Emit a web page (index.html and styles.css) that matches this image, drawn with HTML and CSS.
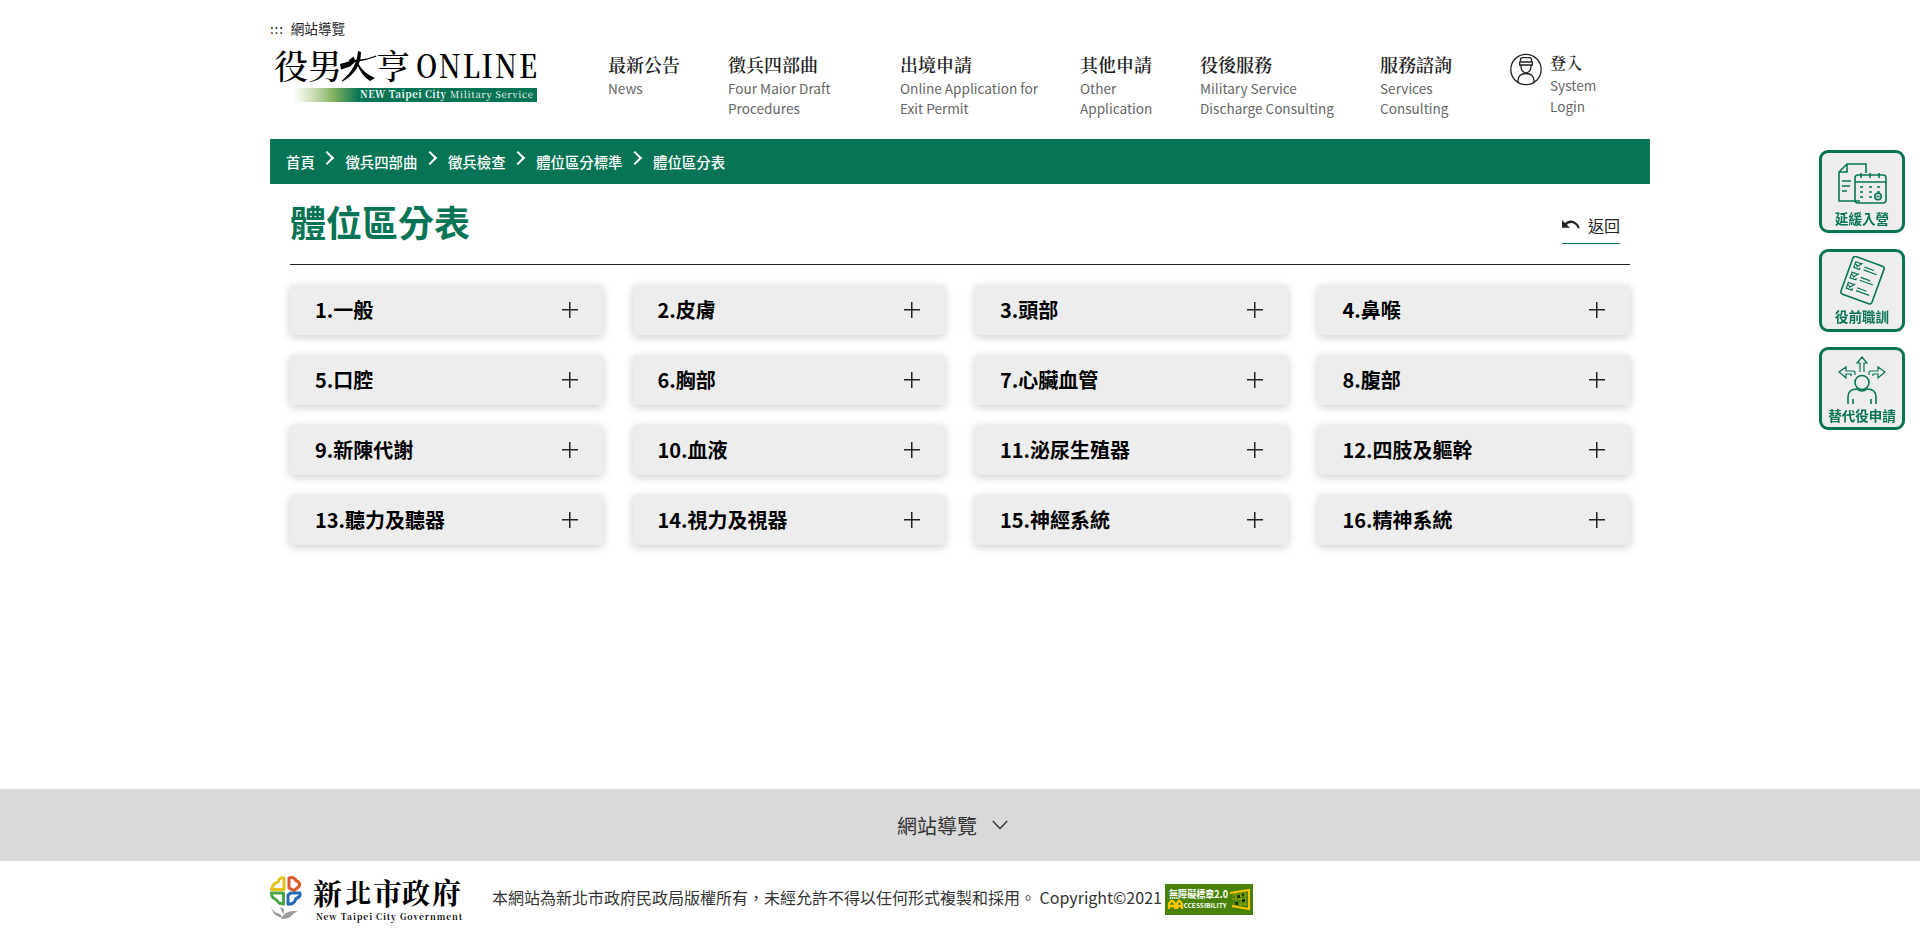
FILE: index.html
```html
<!DOCTYPE html>
<html lang="zh-Hant">
<head>
<meta charset="utf-8">
<title>體位區分表</title>
<link rel="stylesheet" href="styles.css">
</head>
<body>
<div class="page">
  <header class="header">
    <div class="brand">
      <div class="sitemap-link"><a class="dots">:::</a><a>網站導覽</a></div>
      <svg class="logo" width="270" height="60" viewBox="0 0 270 60">
        <defs>
          <linearGradient id="bar"><stop offset="0" stop-color="#fff"/><stop offset=".08" stop-color="#cfdfb8"/><stop offset=".17" stop-color="#7fae5e"/><stop offset=".27" stop-color="#077555"/></linearGradient>
        </defs>
        <g class="logo-zh">
          <text x="4" y="32" font-size="34">役</text>
          <text x="38" y="32" font-size="34">男</text>
          <text x="106" y="32" font-size="34">亨</text>
        </g>
        <g class="brush">
          <path d="M70 17 L82 13.500 L97 11.500 L106 8.500 L106.500 9.500 L96 13 L85 15 L80 19.500 L71 22.500Z"/>
          <path d="M88 4 L91 5 Q91 24 72.500 34.500 L71.500 34 Q87 21 88 4Z"/>
          <path d="M88 16 Q93 26 105 31 L100 34 Q91 28 87 17Z"/>
          <path d="M79 13 L83.500 9.500 L85 13 L80 18Z"/>
        </g>
        <text class="logo-en" transform="translate(146 31) scale(.84 1)" font-size="32.500" textLength="144">ONLINE</text>
        <rect x="23" y="41" width="244" height="14" fill="url(#bar)"/>
        <text class="logo-sub" x="90" y="51" textLength="86" font-weight="700">NEW Taipei City</text>
        <text class="logo-sub" x="180" y="51" textLength="83">Military Service</text>
      </svg>
    </div>
    <nav class="nav">
      <a class="nav-item"><b>最新公告</b><span>News</span></a>
      <a class="nav-item"><b>徵兵四部曲</b><span>Four Maior Draft<br>Procedures</span></a>
      <a class="nav-item"><b>出境申請</b><span>Online Application for<br>Exit Permit</span></a>
      <a class="nav-item"><b>其他申請</b><span>Other<br>Application</span></a>
      <a class="nav-item"><b>役後服務</b><span>Military Service<br>Discharge Consulting</span></a>
      <a class="nav-item"><b>服務諮詢</b><span>Services<br>Consulting</span></a>
    </nav>
    <a class="login">
      <svg width="32" height="33" viewBox="0 0 32 33" fill="none" stroke="#222" stroke-width="1.300">
        <circle cx="16" cy="16.500" r="15.200"/>
        <path d="M10.500 8V7Q10.500 4.700 12.500 4.700H19.500Q21.500 4.700 21.500 7V8L22.300 9V12H9.700V9L10.500 8M10.500 9H21.500M11 12V14Q11.500 19.500 16 19.800Q20.500 19.500 21 14V12M8 29V27.500Q8.500 20.500 16 20.500Q23.500 20.500 24 27.500V29"/>
      </svg>
      <span class="login-text"><b>登入</b><span>System<br>Login</span></span>
    </a>
  </header>

  <div class="crumbs">
    <a>首頁</a><i></i><a>徵兵四部曲</a><i></i><a>徵兵檢查</a><i></i><a>體位區分標準</a><i></i><a>體位區分表</a>
  </div>

  <main class="content">
    <div class="title-row">
      <h1>體位區分表</h1>
      <a class="back">
        <svg width="18" height="10" viewBox="0 0 18 10"><path d="M0 0L3 3Q9-1.500 14 2.500Q17 4.500 17.700 8L16 8.500Q14.500 4.500 11 3.200Q7.500 2.200 4.800 4.700L8 7.800H0Z" fill="#222"/></svg>
        <span>返回</span>
      </a>
    </div>
    <div class="cards">
      <div class="card"><span>1.一般</span><i></i></div>
      <div class="card"><span>2.皮膚</span><i></i></div>
      <div class="card"><span>3.頭部</span><i></i></div>
      <div class="card"><span>4.鼻喉</span><i></i></div>
      <div class="card"><span>5.口腔</span><i></i></div>
      <div class="card"><span>6.胸部</span><i></i></div>
      <div class="card"><span>7.心臟血管</span><i></i></div>
      <div class="card"><span>8.腹部</span><i></i></div>
      <div class="card"><span>9.新陳代謝</span><i></i></div>
      <div class="card"><span>10.血液</span><i></i></div>
      <div class="card"><span>11.泌尿生殖器</span><i></i></div>
      <div class="card"><span>12.四肢及軀幹</span><i></i></div>
      <div class="card"><span>13.聽力及聽器</span><i></i></div>
      <div class="card"><span>14.視力及視器</span><i></i></div>
      <div class="card"><span>15.神經系統</span><i></i></div>
      <div class="card"><span>16.精神系統</span><i></i></div>
    </div>
  </main>
</div>

<div class="sitemap-bar"><span>網站導覽</span><svg width="16" height="10" viewBox="0 0 16 10"><path d="M.7 1L8 8.500L15.300 1" fill="none" stroke="#333" stroke-width="1.400"/></svg></div>

<footer class="footer">
  <svg class="gov" width="196" height="50" viewBox="0 0 196 50">
    <g fill="none" stroke-width="3" stroke-linejoin="round">
      <path stroke="#e8c21c" d="M14 14.500V3Q10 1.500 8 7Q3 8 1.500 14.500Z"/>
      <path stroke="#e0592a" d="M19 13V3Q24 1.500 26 5.500Q31 7.500 29 11.500L24 15.500Z"/>
      <path stroke="#4ea345" d="M13.500 18V29L9 28Q7 25 5 24Q1 22 1.500 18Z"/>
      <path stroke="#2869b2" d="M18 29V20L21 18H30Q31 22 26 23.500Q24 30 18 29Z"/>
    </g>
    <path fill="#999" d="M1 32Q4 38 8 38Q11 39 13 43Q9 42 7 41Q3 39 1 32ZM10 32L13.500 40L14 34ZM28 36.500Q16 34 11 44Q20 44 22 40Q24 37 28 36.500Z"/>
    <g class="gov-zh">
      <text x="43" y="30" font-size="29">新</text>
      <text x="75" y="28" font-size="26">北</text>
      <text x="103" y="30" font-size="29">市</text>
      <text x="132" y="29" font-size="28">政</text>
      <text x="162" y="29" font-size="29">府</text>
    </g>
    <text class="gov-en" x="46" y="45" textLength="146">New Taipei City Government</text>
  </svg>
  <p>本網站為新北市政府民政局版權所有，未經允許不得以任何形式複製和採用。 Copyright©2021</p>
  <svg class="a11y" width="88" height="31" viewBox="0 0 88 31">
    <rect width="88" height="31" fill="#488206"/>
    <text x="4" y="14" font-size="10" textLength="59" lengthAdjust="spacingAndGlyphs" fill="#fff">無障礙標章2.0</text>
    <path d="M4 25V20Q7 14 10 20V25M5 22H9M12 25V20Q14 14 17 20V25M13 22H16" fill="none" stroke="#fdc500" stroke-width="2.300"/>
    <text x="18.500" y="24" font-size="6.500" textLength="43" lengthAdjust="spacingAndGlyphs" fill="#fff">CCESSIBILITY</text>
    <path d="M65 9L84 6V25L67 22" fill="none" stroke="#fdc500" stroke-width="2"/>
    <path d="M68 11H82M67 15H82M68 20H82M71 9V22M76 8V22M80 8V23" stroke="#b8b000" stroke-width="1" stroke-dasharray="2 1"/>
    <path d="M72 11h3v3h-3zM77 15h3v3h-3zM70 18h3v3h-3zM77 10h2v2h-2z" fill="#153800"/>
  </svg>
</footer>

<aside class="quick">
  <a>
    <svg width="54" height="46" viewBox="0 0 54 46" class="line">
      <path d="M25 39H4V10L12 2H31V11M4 10H12V2M7 19H16M7 24H15M7 29H12"/>
      <rect x="20" y="13" width="31" height="28" rx="3"/>
      <path d="M20 20H51M26 11v5M35 11v5M44 11v5"/>
      <path d="M25 25h3M34 25h3M42 25h3M25 30h3M34 30h3M42 30h3M25 35h3M34 35h3" stroke-width="1.500"/>
      <circle cx="43" cy="34.500" r="3.200"/><path d="M41.500 34.500h3"/>
    </svg>
    <span>延緩入營</span>
  </a>
  <a>
    <svg width="54" height="50" viewBox="0 0 54 50" class="line">
      <g transform="translate(27 24) rotate(20)">
        <rect x="-16" y="-20" width="33" height="40" rx="2.500"/>
        <path d="M-6-15H-12V-9H-6V-11M-11-13L-9-11L-5-16M-2-13H8M-2-10H12M-6-4H-12V2H-6V0M-11-2L-9 0L-5-5M-2-2H8M-2 1H12M-6 7H-12V13H-6V11M-11 9L-9 11L-5 6M-2 9H8M-2 12H12" stroke-width="1.200"/>
      </g>
    </svg>
    <span>役前職訓</span>
  </a>
  <a>
    <svg width="54" height="50" viewBox="0 0 54 50" class="line">
      <path d="M25 17V8H22L27 2L32 8H29V17M20 20V17Q20 16 18 16H11V12L4 17L11 23V19H16V21M34 20V17Q34 16 36 16H43V12L50 17L43 23V19H38V21" stroke-width="1.200"/>
      <circle cx="27" cy="27.500" r="7"/>
      <path d="M13 49V42Q13 34 22 34Q27 38 32 34Q41 34 41 42V49M18 49V44M36 49V44"/>
    </svg>
    <span>替代役申請</span>
  </a>
</aside>
</body>
</html>
```
FILE: styles.css
```css
* { box-sizing: border-box; }
body {
  margin: 0;
  height: 936px;
  overflow: hidden;
  display: flex;
  flex-direction: column;
  background: #fff;
  color: #222;
  font-family: "Noto Sans CJK TC", "Noto Sans", sans-serif;
}
.page { width: 1380px; margin: 0 auto; flex: 1; }
.header { height: 139px; display: flex; }
.brand { width: 338px; padding-top: 18px; }
.sitemap-link { display: flex; gap: 7px; height: 20px; font-size: 13.600px; line-height: 20px; }
.dots { letter-spacing: .8px; }
.logo { display: block; margin-top: 9px; overflow: visible; }
.logo-zh, .logo-en, .logo-sub { font-family: "Noto Serif CJK TC", "Noto Serif TC", "Liberation Serif", serif; }
.logo-zh { font-weight: 500; }
.logo-en { font-weight: 600; }
.logo-sub { font-size: 9.500px; fill: #fff; }
.nav { display: grid; grid-template-columns: 120px 172px 180px 120px 180px 130px; padding-top: 51px; }
.nav-item b, .login b {
  display: block;
  font-family: "Noto Serif CJK TC", "Noto Serif TC", "Noto Sans CJK TC", serif;
  font-weight: 600;
  font-size: 18px;
  line-height: 26px;
  white-space: nowrap;
}
.nav-item span, .login-text span { display: block; font-size: 13.600px; line-height: 20px; color: #666; white-space: nowrap; }
.nav-item span { padding-top: 1px; }
.login { display: flex; gap: 8px; padding: 53px 0 0; }
.login b { font-size: 16px; line-height: 22px; margin-top: -1px; }
.login-text span { line-height: 21px; padding-top: 1px; }
.crumbs {
  height: 45px;
  padding: 0 16px 1px;
  display: flex;
  align-items: center;
  background: #077555;
  color: #fff;
  font-size: 14.400px;
  font-weight: 500;
}
.crumbs i {
  width: 10px;
  height: 10px;
  margin: -7px 13.300px 0 7.300px;
  border: solid #fff;
  border-width: 2px 2px 0 0;
  transform: rotate(45deg);
}
.content { padding: 0 20px; }
.title-row { height: 81px; border-bottom: 1px solid #222; display: flex; justify-content: space-between; align-items: flex-start; }
h1 { margin: 11px 0 0; font-size: 36px; line-height: 52px; font-weight: 700; color: #077555; }
.back { display: flex; align-items: center; gap: 8px; height: 34px; margin: 26px 10px 0 0; padding-bottom: 3px; border-bottom: 1px solid #077555; font-size: 16px; }
.cards { display: grid; grid-template-columns: repeat(4, 1fr); gap: 20px 30px; margin-top: 20px; }
.card {
  height: 50px;
  padding: 0 25px;
  display: flex;
  align-items: center;
  justify-content: space-between;
  background: #ededed;
  border-radius: 3px;
  box-shadow: 0 2px 10px rgba(0, 0, 0, .2);
  color: #000;
  font-size: 20px;
  font-weight: 700;
}
.card span { padding-bottom: 2px; }
.card i {
  width: 16px;
  height: 16px;
  background: linear-gradient(#222, #222) center / 16px 1.500px no-repeat, linear-gradient(#222, #222) center / 1.500px 16px no-repeat;
}
.sitemap-bar { height: 72px; display: flex; align-items: center; justify-content: center; gap: 15px; padding-right: 15px; background: #d9d9d9; color: #333; font-size: 20px; }
.footer { width: 1380px; height: 75px; margin: 0 auto; display: flex; padding-top: 14px; }
.gov { overflow: visible; }
.gov-zh { font-family: "Noto Serif CJK TC", "Noto Serif TC", "Noto Sans CJK TC", serif; font-weight: 700; }
.gov-en { font-family: "Noto Serif CJK TC", "Liberation Serif", serif; font-weight: 700; font-size: 8.500px; }
.footer p { margin: 10px 3px 0 26px; font-size: 16px; line-height: 24px; color: #333; white-space: nowrap; }
.a11y { margin-top: 9px; font-weight: 700; overflow: visible; }
.quick { position: fixed; top: 150px; right: 15px; width: 86px; display: grid; gap: 15.500px; }
.quick a {
  height: 83px;
  display: flex;
  flex-direction: column;
  align-items: center;
  justify-content: flex-end;
  padding-bottom: 2.500px;
  border: 3px solid #077555;
  border-radius: 9px;
  background: #ededed;
  color: #077555;
  font-size: 13.500px;
  line-height: 20px;
  font-weight: 700;
  white-space: nowrap;
}
.line { fill: none; stroke: #077555; stroke-width: 1.600; flex: none; }
```
